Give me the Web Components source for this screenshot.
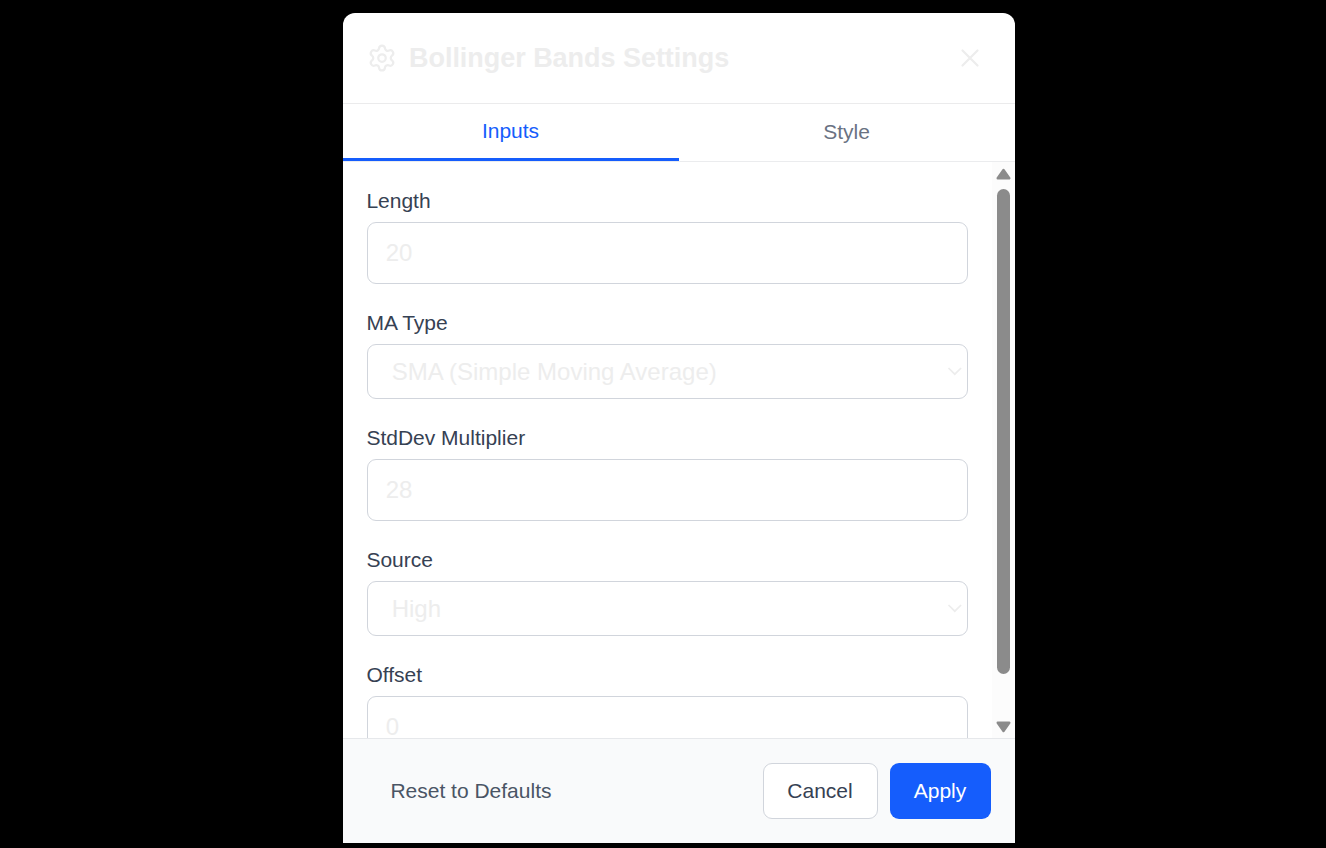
<!DOCTYPE html>
<html lang="en">
<head>
<meta charset="utf-8">
<title>Bollinger Bands Settings</title>
<style>
html,body{margin:0;height:100%;background:#000;overflow:hidden}
body{font-family:"Liberation Sans",Arial,sans-serif;display:flex;justify-content:center;padding:13px 0 0 32px;box-sizing:border-box;align-items:flex-start}
</style>
</head>
<body>
<settings-dialog>
  <dialog-header slot="header">Bollinger Bands Settings</dialog-header>
  <tab-item slot="tab" active>Inputs</tab-item>
  <tab-item slot="tab">Style</tab-item>
  <form-field label="Length">20</form-field>
  <form-field label="MA Type" select>SMA (Simple Moving Average)</form-field>
  <form-field label="StdDev Multiplier">28</form-field>
  <form-field label="Source" select>High</form-field>
  <form-field label="Offset">0</form-field>
  <action-button slot="reset" kind="plain">Reset to Defaults</action-button>
  <action-button slot="action" kind="outline">Cancel</action-button>
  <action-button slot="action" kind="primary">Apply</action-button>
</settings-dialog>
<script>
class Base extends HTMLElement {
  connectedCallback() {
    if (!this.shadowRoot) this.attachShadow({ mode: "open" }).innerHTML = this.render();
  }
}
customElements.define("settings-dialog", class extends Base {
  render() {
    return `<style>
      :host{display:flex;flex-direction:column;width:672px;height:830px;background:#fff;border-radius:12px 12px 0 0;overflow:hidden;flex:none}
      nav{display:flex;height:57px;border-bottom:1px solid #ebecee;flex:none}
      main{flex:1;min-height:0;display:flex;overflow:hidden}
      .fields{flex:1;min-width:0;padding:24px;display:flex;flex-direction:column;gap:24px}
      footer{flex:none;height:104px;border-top:1px solid #e6e8eb;background:#f9fafb;display:flex;align-items:center;justify-content:space-between;padding:0 24px;box-sizing:content-box}
      .actions{display:flex;gap:12px}
    </style>
    <slot name="header"></slot>
    <nav><slot name="tab"></slot></nav>
    <main><div class="fields"><slot></slot></div><scroll-bar></scroll-bar></main>
    <footer><slot name="reset"></slot><div class="actions"><slot name="action"></slot></div></footer>`;
  }
});
customElements.define("dialog-header", class extends Base {
  render() {
    return `<style>
      :host{display:flex;align-items:center;gap:12px;height:90px;padding:0 30px 0 24px;border-bottom:1px solid #ebebec;color:#ededed;flex:none}
      h2{margin:0;flex:1;font-size:27px;line-height:42px;font-weight:700;letter-spacing:-.035px}
      svg{display:block;fill:none;stroke:currentColor;stroke-width:1.8;stroke-linecap:round;stroke-linejoin:round}
    </style>
    <svg width="30" height="30" viewBox="0 0 24 24"><path d="M9.671 4.136a2.34 2.34 0 0 1 4.659 0 2.34 2.34 0 0 0 3.319 1.915 2.34 2.34 0 0 1 2.33 4.033 2.34 2.34 0 0 0 0 3.831 2.34 2.34 0 0 1-2.33 4.033 2.34 2.34 0 0 0-3.319 1.915 2.34 2.34 0 0 1-4.659 0 2.34 2.34 0 0 0-3.32-1.915 2.34 2.34 0 0 1-2.33-4.033 2.34 2.34 0 0 0 0-3.831A2.34 2.34 0 0 1 6.35 6.051a2.34 2.34 0 0 0 3.319-1.915"/><circle cx="12" cy="12" r="3"/></svg>
    <h2><slot></slot></h2>
    <svg width="30" height="30" viewBox="0 0 24 24"><path d="M18 6 6 18M6 6l12 12"/></svg>`;
  }
});
customElements.define("tab-item", class extends Base {
  render() {
    return `<style>
      :host{display:flex;flex:1;align-items:center;justify-content:center;height:57px;box-sizing:border-box;padding:0 1px 2px 0;font-size:21px;line-height:30px;color:#6a7282}
      :host([active]){color:#155dfc;padding-bottom:0;border-bottom:3px solid #155dfc}
    </style><slot></slot>`;
  }
});
customElements.define("form-field", class extends Base {
  render() {
    const select = this.hasAttribute("select");
    return `<style>
      :host{display:block;flex:none}
      .label{font-size:21px;line-height:30px;color:#364153;margin:0 0 6px -.6px}
      .box{display:flex;align-items:center;justify-content:space-between;height:62px;box-sizing:border-box;border:1px solid #d1d5dc;border-radius:9px;padding:0 17.7px;font-size:24px;line-height:36px;color:#ededed}
      .select{height:55px;padding:0 5px 1px 23.7px}
      .select span{position:relative;top:.5px}
      svg{display:block;fill:none;stroke:#ededed;stroke-width:1.7}
    </style>
    <div class="label">${this.getAttribute("label")}</div>
    <div class="box ${select ? "select" : ""}"><span><slot></slot></span>${select ? '<svg width="15" height="10" viewBox="0 0 15 10"><path d="M1.5 2 7.8 8.2 14.1 2"/></svg>' : ""}</div>`;
  }
});
customElements.define("scroll-bar", class extends Base {
  render() {
    return `<style>
      :host{display:flex;flex-direction:column;align-items:center;width:23px;box-sizing:border-box;padding:6px 0 5px;background:#fcfcfc;flex:none}
      svg{display:block;fill:#8b8b8b;stroke:#8b8b8b;stroke-width:2.4;stroke-linejoin:round}
      .thumb{width:13px;height:485px;border-radius:6.5px;background:#8b8b8b;margin-top:9px}
      .down{margin-top:auto}
    </style>
    <svg width="15" height="12" viewBox="0 0 15 12"><path d="M7.5 2 13.3 10.3H1.7Z"/></svg>
    <div class="thumb"></div>
    <svg class="down" width="15" height="12" viewBox="0 0 15 12"><path d="M7.5 10 13.3 1.7H1.7Z"/></svg>`;
  }
});
customElements.define("action-button", class extends Base {
  render() {
    return `<style>
      :host{display:flex;align-items:center;justify-content:center;height:56px;box-sizing:border-box;padding:0 24px 0 23.4px;border-radius:9px;font-size:21px;line-height:30px;color:#4a5565;white-space:nowrap}
      :host([kind=outline]){width:115px;padding:0 1px 0 0;border:1px solid #d1d5dc;background:#fff;color:#364153}
      :host([kind=primary]){width:101px;padding:0 1px 0 0;background:#155dfc;color:#fff}
    </style><slot></slot>`;
  }
});
</script>
</body>
</html>
